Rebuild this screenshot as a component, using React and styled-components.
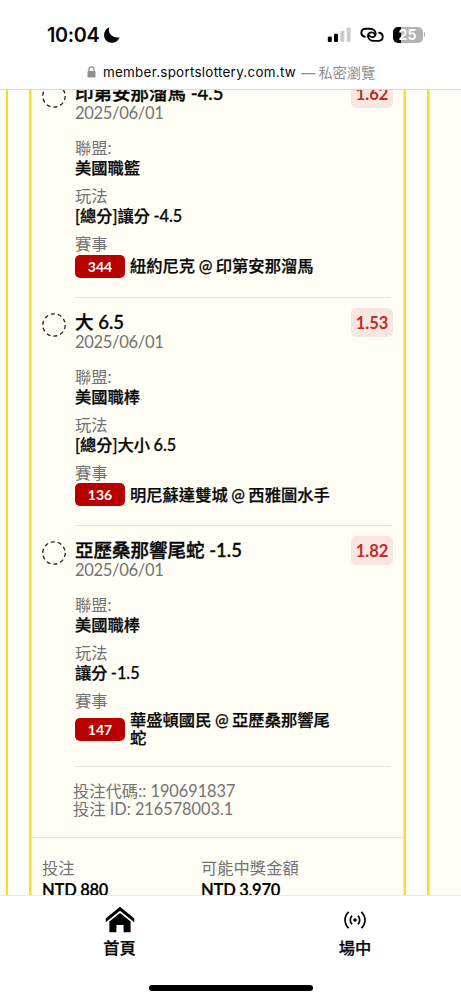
import React from "react";
import styled, { createGlobalStyle } from "styled-components";

const GlobalStyle = createGlobalStyle`
  * { box-sizing: border-box; }
  body {
    margin: 0;
    background: #fff;
    color: #060606;
    font-family: Lato, "Noto Sans CJK TC", sans-serif;
    -webkit-font-smoothing: antialiased;
  }
`;

const Screen = styled.div`
  display: flex;
  flex-direction: column;
  width: 461px;
  height: 1000px;
  overflow: hidden;
`;

const BrowserHeader = styled.header`
  flex: none;
  height: 90px;
  border-bottom: 1px solid #d9d9d9;
  font-family: Inter, "Noto Sans CJK TC", sans-serif;
`;

const StatusBar = styled.div`
  display: flex;
  align-items: center;
  justify-content: space-between;
  height: 59px;
  padding: 10px 36px 0 47px;
`;

const Clock = styled.div`
  display: flex;
  align-items: center;
  gap: 5px;
  font-size: 19.8px;
  font-weight: 600;
  letter-spacing: -0.3px;
`;

const StatusIcons = styled.div`
  display: flex;
  align-items: center;
  gap: 9px;
`;

const Battery = styled.div`
  display: flex;
  align-items: center;
  gap: 1px;
`;

const BatteryBody = styled.div`
  width: 30px;
  height: 16px;
  border-radius: 5px;
  background: linear-gradient(90deg, #000 25%, #b3b3b3 25%);
  color: #fff;
  font-size: 14px;
  font-weight: 700;
  line-height: 16px;
  text-align: center;
`;

const BatteryCap = styled.div`
  width: 1.5px;
  height: 5px;
  border-radius: 0 2px 2px 0;
  background: #b3b3b3;
`;

const AddressBar = styled.div`
  display: flex;
  align-items: center;
  height: 26px;
  padding-left: 87px;
  font-size: 13.4px;
  white-space: pre;
`;

const Host = styled.span`
  margin-left: 7px;
  letter-spacing: 0.28px;
`;

const Mode = styled.span`
  margin-left: 5px;
  color: #8e8e92;
  font-size: 14.2px;
  word-spacing: -0.8px;
`;

const Carousel = styled.main`
  display: flex;
  flex: none;
  gap: 21px;
  height: 805px;
  overflow: hidden;
`;

const Ticket = styled.article`
  flex: none;
  width: ${(p) => p.$width}px;
  padding: 0 1px;
  border: 0 solid #ffd92f;
  border-left-width: ${(p) => (p.$left ? 2 : 0)}px;
  border-right-width: ${(p) => (p.$right ? 2 : 0)}px;
  background: #fffdf4;
  box-shadow:
    inset 1px 0 ${(p) => (p.$left ? "#ffec8f" : "#fffdf4")},
    inset -1px 0 ${(p) => (p.$left && p.$right ? "#ffec8f" : "#fffdf4")};
`;

const Legs = styled.div`
  margin-top: -21px;
`;

const Leg = styled.section`
  display: grid;
  grid-template-columns: 33px 316px;
  padding: 12px 0 0 10px;
`;

const Pending = styled.svg`
  display: block;
  margin-top: 3px;
`;

const LegBody = styled.div`
  border-bottom: 1px solid #e5e2dd;
  padding-bottom: 18.7px;
`;

const LegHead = styled.div`
  display: flex;
  justify-content: space-between;
  height: 57px;
  margin-right: -2px;
`;

const Pick = styled.h2`
  margin: 0;
  font-size: 18.5px;
  font-weight: 500;
  -webkit-text-stroke: 0.35px currentColor;
  line-height: 24px;
  white-space: nowrap;
`;

const EventDate = styled.div`
  color: #737373;
  font-size: 16.6px;
  letter-spacing: -0.35px;
  line-height: 17px;
`;

const Odds = styled.div`
  width: 42px;
  height: 29px;
  margin-top: -2px;
  border-radius: 5px;
  background: #f8e7e0;
  color: #bd2d24;
  font-size: 16.5px;
  font-weight: 700;
  line-height: 30px;
  text-align: center;
`;

const Label = styled.div`
  color: #737373;
  font-size: 16.3px;
  line-height: 20px;
`;

const Value = styled.div`
  margin-bottom: 8px;
  font-size: 16.3px;
  font-weight: 500;
  -webkit-text-stroke: 0.25px currentColor;
  word-spacing: -0.8px;
  line-height: 20px;
`;

const Match = styled.div`
  display: flex;
  align-items: center;
  gap: 5px;
  min-height: 24px;
`;

const MatchNo = styled.span`
  flex: none;
  width: 50px;
  height: 23px;
  border-radius: 5px;
  background: #b90000;
  color: #fff;
  font-size: 14px;
  font-weight: 700;
  line-height: 23px;
  text-align: center;
`;

const Teams = styled.span`
  width: 204px;
  font-size: 16.3px;
  font-weight: 500;
  -webkit-text-stroke: 0.25px currentColor;
  word-spacing: -0.6px;
  line-height: 18px;
`;

const Reference = styled.div`
  height: 71px;
  padding: 15px 0 0 41px;
  border-bottom: 1px solid #e5e2dd;
  color: #737373;
  font-size: 16.3px;
  line-height: 18px;
`;

const Totals = styled.div`
  display: grid;
  grid-template-columns: 159px 1fr;
  padding: 20px 0 0 10px;
`;

const Amount = styled.div`
  font-size: 16.6px;
  font-weight: 700;
  letter-spacing: -0.3px;
  line-height: 24px;
`;

const TabBar = styled.nav`
  display: flex;
  flex: none;
  height: 85px;
  border-top: 1px solid #e9e9e6;
`;

const Tab = styled.a`
  display: flex;
  flex: none;
  flex-direction: column;
  align-items: center;
  width: ${(p) => p.$width}px;
  padding-top: 10px;
  font-size: 16.3px;
  font-weight: 500;
  -webkit-text-stroke: 0.25px currentColor;
  line-height: 26px;

  svg { display: block; margin-bottom: 2px; }
`;

const HomeIndicator = styled.div`
  flex: none;
  width: 164px;
  height: 6px;
  margin: 5px auto 0;
  border-radius: 3px;
  background: #000;
`;

const MoonIcon = () => (
  <svg width="16" height="16" viewBox="0 0 16 16">
    <path d="M5.3.3C3.6 5.9 7 11 15.6 10.4C14.3 13.8 11.2 15.8 7.7 15.8C3.4 15.8.1 12.5.1 8.3C.1 4.7 2.2 1.5 5.3.3Z" />
  </svg>
);

const SignalIcon = () => (
  <svg width="24" height="16" viewBox="0 0 24 16">
    <rect x="0.8" y="9.6" width="4" height="5.4" rx="1.2" />
    <rect x="7" y="6.8" width="4" height="8.2" rx="1.2" />
    <rect x="13.4" y="3.7" width="4" height="11.3" rx="1.2" fill="#ccc" />
    <rect x="19.7" y="0.5" width="4" height="14.5" rx="1.2" fill="#ccc" />
  </svg>
);

const LinkIcon = () => (
  <svg width="24" height="16" viewBox="0 0 24 16" fill="none" stroke="#000" strokeWidth="1.9" strokeLinecap="round">
    <path d="M4.8 9.7C2.6 9.2 1.3 7.7 1.3 5.8C1.3 3.3 3.1 1.7 5.7 1.7H10.1C13.2 1.7 15.7 3.8 15.7 6.6C15.7 8.8 14.3 10.1 12.1 10.1C10.4 10.1 9.5 9.4 9 8.2" />
    <path d="M19.2 5.8C21.4 6.2 22.7 7.7 22.7 9.8C22.7 12.2 20.9 13.9 18.3 13.9H14C10.5 13.9 8 11.8 8 9C8 6.8 9.4 5.4 11.7 5.4C13.5 5.4 14.3 6.2 14.8 7.3" />
  </svg>
);

const LockIcon = () => (
  <svg width="9" height="12" viewBox="0 0 9 12">
    <rect x="0.5" y="5" width="8" height="6.5" rx="1.2" fill="#8e8e92" />
    <path d="M2 5.5V3.3C2 1.7 3 0.8 4.5 0.8S7 1.7 7 3.3V5.5" fill="none" stroke="#8e8e92" strokeWidth="1.2" />
  </svg>
);

const HomeIcon = () => (
  <svg width="30" height="27" viewBox="0 0 30 27">
    <path d="M15 .7L29.3 12.6V16.3L15 4.8L.7 16.3V12.6Z" />
    <path d="M15 7L25.6 15.5V26.3H18.6V19H11.4V26.3H4.4V15.5Z" />
  </svg>
);

const LiveIcon = () => (
  <svg width="22" height="27" viewBox="0 0 22 27" fill="none" stroke="#000" strokeWidth="1.7">
    <circle cx="11" cy="14" r="1.8" fill="#000" stroke="none" />
    <path d="M8.1 9.6C5.7 11.8 5.7 16.2 8.1 18.4M13.9 9.6C16.3 11.8 16.3 16.2 13.9 18.4" />
    <path d="M4.7 5.8C-.2 10.3-.2 17.7 4.7 22.2M17.3 5.8C22.2 10.3 22.2 17.7 17.3 22.2" />
  </svg>
);

const legs = [
  { pick: "印第安那溜馬 -4.5", odds: "1.62", league: "美國職籃", market: "[總分]讓分 -4.5", no: "344", teams: "紐約尼克 @ 印第安那溜馬" },
  { pick: "大 6.5", odds: "1.53", league: "美國職棒", market: "[總分]大小 6.5", no: "136", teams: "明尼蘇達雙城 @ 西雅圖水手" },
  { pick: "亞歷桑那響尾蛇 -1.5", odds: "1.82", league: "美國職棒", market: "讓分 -1.5", no: "147", teams: "華盛頓國民 @ 亞歷桑那響尾蛇" },
];

const BetLeg = ({ leg }) => (
  <Leg>
    <Pending width="24" height="24" viewBox="0 0 24 24">
      <circle cx="12" cy="12" r="11.2" fill="none" stroke="#222" strokeWidth="1.3" strokeDasharray="4 3.037" />
    </Pending>
    <LegBody>
      <LegHead>
        <div>
          <Pick>{leg.pick}</Pick>
          <EventDate>2025/06/01</EventDate>
        </div>
        <Odds>{leg.odds}</Odds>
      </LegHead>
      <Label>聯盟:</Label>
      <Value>{leg.league}</Value>
      <Label>玩法</Label>
      <Value>{leg.market}</Value>
      <Label>賽事</Label>
      <Match>
        <MatchNo>{leg.no}</MatchNo>
        <Teams>{leg.teams}</Teams>
      </Match>
    </LegBody>
  </Leg>
);

export default function App() {
  return (
    <Screen>
      <GlobalStyle />
      <BrowserHeader>
        <StatusBar>
          <Clock>10:04<MoonIcon /></Clock>
          <StatusIcons>
            <SignalIcon />
            <LinkIcon />
            <Battery>
              <BatteryBody>25</BatteryBody>
              <BatteryCap />
            </Battery>
          </StatusIcons>
        </StatusBar>
        <AddressBar>
          <LockIcon />
          <Host>member.sportslottery.com.tw</Host>
          <Mode>— 私密瀏覽</Mode>
        </AddressBar>
      </BrowserHeader>
      <Carousel>
        <Ticket $width={8} $right />
        <Ticket $width={377} $left $right>
          <Legs>
            {legs.map((leg) => <BetLeg key={leg.no} leg={leg} />)}
          </Legs>
          <Reference>
            投注代碼:: 190691837<br />
            投注 ID: 216578003.1
          </Reference>
          <Totals>
            <div>
              <Label>投注</Label>
              <Amount>NTD 880</Amount>
            </div>
            <div>
              <Label>可能中獎金額</Label>
              <Amount>NTD 3,970</Amount>
            </div>
          </Totals>
        </Ticket>
        <Ticket $width={34} $left />
      </Carousel>
      <TabBar>
        <Tab $width={239}><HomeIcon />首頁</Tab>
        <Tab $width={232}><LiveIcon />場中</Tab>
      </TabBar>
      <HomeIndicator />
    </Screen>
  );
}
